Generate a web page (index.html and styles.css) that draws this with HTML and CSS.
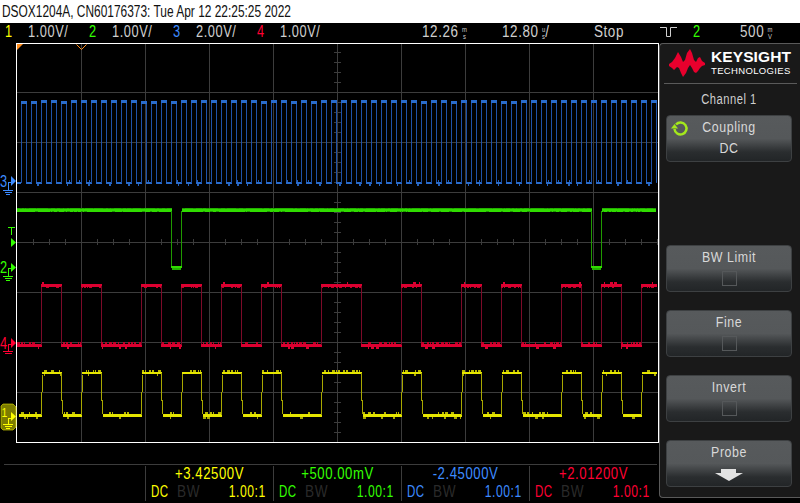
FILE: index.html
```html
<!DOCTYPE html>
<html lang="en">
<head>
<meta charset="utf-8">
<title>DSOX1204A</title>
<link rel="stylesheet" href="styles.css">
</head>
<body>
<header class="title"><span class="title-text">DSOX1204A, CN60176373: Tue Apr 12 22:25:25 2022</span></header>
<div class="status">
  <span class="ch c1 yellow">1</span><span class="scale">1.00V/</span>
  <span class="ch green">2</span><span class="scale">1.00V/</span>
  <span class="ch blue">3</span><span class="scale">2.00V/</span>
  <span class="ch red">4</span><span class="scale">1.00V/</span>
  <span class="val v-delay">12.26<span class="unit"><i>m</i><i>s</i></span></span>
  <span class="val v-time">12.80<span class="unit"><i>u</i><i>s</i></span>/</span>
  <span class="val v-stop">Stop</span>
  <svg class="trig" width="17" height="11" viewBox="0 0 17 11"><path d="M0 .5H6.5V9.5H10.5V.5H17"/></svg>
  <span class="ch v-src green">2</span>
  <span class="val v-level">500<span class="unit"><i>m</i><i>V</i></span></span>
</div>
<div class="main">
  <div class="scope">
    <svg id="plot" class="plot" width="659" height="400" viewBox="0 43 659 400">
      <g id="grid"></g>
      <g id="traces"></g>
      <rect class="frame" x="16.5" y="43.5" width="642" height="399"/>
      <path class="orange" d="M17 44h6l-6 6z"/>
      <path class="orange-line" d="M76.5 44.5L81.5 49.5L86.5 44.5"/>
      <g class="m-blue">
        <text class="mk" x="0" y="187">3</text>
        <path class="arrow" d="M11 176l5 5-5 5z"/>
        <path class="gnd" d="M12 182H8V190M3 190H13M4.500 192.500H11.500M6 194.500H10"/>
      </g>
      <g class="m-green">
        <path class="gnd" d="M8 227.500H15M11.500 228V235"/>
        <path class="arrow" d="M11 238l5 4.500-5 4.500z"/>
        <text class="mk" x="0" y="273">2</text>
        <path class="arrow" d="M11 263l5 4.500-5 4.500z"/>
        <path class="gnd" d="M12 268H8V276M3 276H13M4.500 278.500H11.500M6 280.500H10"/>
      </g>
      <g class="m-red">
        <text class="mk" x="0" y="349">4</text>
        <path class="arrow" d="M11 338l5 5-5 5z"/>
        <path class="gnd" d="M12 344H8V351.500M3 351.500H13M4.500 353.500H11.500"/>
      </g>
      <g class="m-yellow">
        <path class="tab" d="M3 404H13L16 407V427L13 430H3L1 428V406z"/>
        <text class="mk" x="1.500" y="417">1</text>
        <path class="arrow-w" d="M11 412l5 4.500-5 4.500z"/>
        <path class="gnd-w" d="M12 418H8V424M3 424H13M4.500 426H11.500M6 428H10"/>
      </g>
    </svg>
    <div class="readout">
      <div class="cell yellow">
        <div class="offset">+3.42500V</div>
        <div class="probe"><span class="dc">DC</span><span class="bw">BW</span><span class="ratio">1.00:1</span></div>
      </div>
      <div class="cell green">
        <div class="offset">+500.00mV</div>
        <div class="probe"><span class="dc">DC</span><span class="bw">BW</span><span class="ratio">1.00:1</span></div>
      </div>
      <div class="cell blue">
        <div class="offset">-2.45000V</div>
        <div class="probe"><span class="dc">DC</span><span class="bw">BW</span><span class="ratio">1.00:1</span></div>
      </div>
      <div class="cell red">
        <div class="offset">+2.01200V</div>
        <div class="probe"><span class="dc">DC</span><span class="bw">BW</span><span class="ratio">1.00:1</span></div>
      </div>
    </div>
  </div>
  <aside class="panel">
    <div class="logo">
      <svg width="37" height="29" viewBox="668 49 37 29"><path class="wave" d="M668 64L671 62L674 58L677 52L680 57L682 62L684 60L686 53L689 49L691 53L693 60L695 62L697 58L699 57L701 61L704 63V65L701 66L699 68L697 71L695 73L693 72L691 68L689 65L687 68L685 73L682 77L680 73L678 68L676 67L673 70L671 68L668 66z"/></svg>
      <div class="brand"><div class="k">KEYSIGHT</div><div class="t">TECHNOLOGIES</div></div>
    </div>
    <div class="menu-title">Channel 1</div>
    <div class="btn btn-cycle">
      <svg class="cycle" width="18" height="16" viewBox="0 0 18 16"><path class="cy" d="M5 3.500A6 6 0 1 1 3.500 8"/><path class="cy-h" d="M0 7.500H7L3.500 3z"/></svg>
      <div class="lbl">Coupling</div>
      <div class="lbl">DC</div>
    </div>
    <div class="btn btn-gap"><div class="lbl">BW Limit</div><div class="box"></div></div>
    <div class="btn"><div class="lbl">Fine</div><div class="box"></div></div>
    <div class="btn"><div class="lbl">Invert</div><div class="box"></div></div>
    <div class="btn"><div class="lbl">Probe</div>
      <svg class="down" width="30" height="12" viewBox="0 0 30 12"><path d="M7 0H22V4H29L15 12L1 4H7z"/></svg>
    </div>
  </aside>
</div>
<script src="plot.js"></script>
</body>
</html>
```
FILE: styles.css
```css
* { box-sizing: border-box; }
html, body { margin: 0; padding: 0; }
body {
  width: 800px; height: 503px; overflow: hidden; background: #000;
  font-family: "Liberation Sans", sans-serif;
  color: #cfcfcf;
}
.yellow { color: #ffff00; }
.green { color: #33ff00; }
.blue { color: #3d8bff; }
.red { color: #ff0033; }

.title {
  height: 23px; background: #fff; color: #111; font-size: 16px;
  line-height: 24px; padding-left: 2px; white-space: nowrap;
}
.title-text { display: inline-block; transform: scaleX(.745); transform-origin: left center; }
.status {
  height: 20px; padding-bottom: 2px; display: flex; align-items: center; font-size: 16px;
  letter-spacing: .7px; white-space: nowrap;
}
.ch, .scale, .val { display: block; transform: scaleX(.8); transform-origin: left center; }
.val { transform: scaleX(.84); }
.ch { width: 23px; }
.c1 { margin-left: 5px; }
.scale { width: 61px; }
.unit {
  display: inline-flex; flex-direction: column; height: 10px; margin-left: 4px;
  font-size: 7px; line-height: 7px; vertical-align: 5px; letter-spacing: 0; text-align: center;
}
.unit i { font-style: normal; display: block; flex: none; }
.v-delay { margin-left: 81px; width: 80px; }
.v-time { width: 92px; }
.v-stop { width: 66px; }
.trig { fill: none; stroke: #cfcfcf; stroke-width: 1; width: 17px; flex: none; }
.v-src { margin-left: 16px; width: 47px; }

.main { display: flex; height: 460px; }
.scope { width: 659px; flex: none; }
.plot { display: block; }
.frame { fill: none; stroke: #fff; stroke-width: 1; shape-rendering: crispEdges; }
.gl { fill: #3c3c3c; }
.orange { fill: #ff8c1a; }
.orange-line { fill: none; stroke: #ff8c1a; stroke-width: 1; }
.mk { font-size: 16px; transform-box: fill-box; transform-origin: left center; transform: scaleX(.8); }
.gnd { fill: none; stroke-width: 1; shape-rendering: crispEdges; }
.m-blue .mk, .m-blue .arrow { fill: #3d8bff; } .m-blue .gnd { stroke: #3d8bff; }
.m-green .mk, .m-green .arrow { fill: #33ff00; } .m-green .gnd { stroke: #33ff00; }
.m-red .mk, .m-red .arrow { fill: #ff0033; } .m-red .gnd { stroke: #ff0033; }
.m-yellow .tab { fill: #7c7c00; stroke: #e6e600; stroke-width: .6; }
.m-yellow .mk { fill: #ffff00; font-size: 13px; }
.arrow-w { fill: #ffff00; }
.gnd-w { fill: none; stroke: #ffff00; stroke-width: 1; shape-rendering: crispEdges; }
.t-y { fill: #e6e600; } .t-y-d { fill: #a8a800; } .t-y-m { fill: #b8b800; }
.t-r { fill: #dc0030; } .t-r-d { fill: #7c0a28; } .t-r-m { fill: #c00028; }
.t-g { fill: #30dc00; } .t-g-d { fill: #1f9a00; } .t-g-m { fill: #22b000; }
.t-b { fill: #2a6ccc; } .t-b-d { fill: #1f52a8; } .t-b-m { fill: #2560b8; }

.readout {
  margin: 21px 2px 0 4px; border-top: 1px solid #3c3c3c; padding-left: 141px;
  display: grid; grid-template-columns: repeat(4, 128px); font-size: 16px; letter-spacing: .7px;
}
.cell { border-left: 1px solid #3c3c3c; height: 35px; margin-top: 1px; }
.offset { text-align: center; line-height: 16px; height: 17px; transform: scaleX(.82); }
.probe { display: flex; line-height: 17px; padding: 0 7px 0 5px; }
.dc, .bw { display: block; transform: scaleX(.72); transform-origin: left center; }
.bw { color: #2a2a2a; margin-left: 1px; transform: scaleX(.85); }
.ratio { display: block; margin-left: auto; transform: scaleX(.76); transform-origin: right center; }

.panel {
  width: 141px; height: 455px; flex: none; background: #191919;
  border: 1px solid #5a5a5a; border-right: 0; border-radius: 4px 0 0 4px;
  padding: 0 0 0 6px; display: flex; flex-direction: column; align-items: flex-start;
}
.logo {
  display: flex; align-items: flex-start; width: 133px; height: 40px; flex: none; margin-left: -2px;
  padding: 5px 0 0 5px; border-bottom: 1px solid #5a5a5a;
}
.wave { fill: #e8002d; }
.brand { margin-left: 5px; color: #fff; }
.k { font-weight: 700; font-size: 15.500px; line-height: 16px; letter-spacing: .1px; }
.t { font-size: 9.500px; line-height: 11px; letter-spacing: .35px; }
.menu-title {
  width: 126px; flex: none; text-align: center; font-size: 15.500px; letter-spacing: .7px;
  line-height: 29px; height: 31px; transform: scaleX(.72);
}
.btn {
  width: 126px; height: 47px; flex: none; margin-bottom: 18px; position: relative;
  border: 1px solid #3d4042; border-radius: 4px;
  background: linear-gradient(#575a5c 0, #55585a 50%, #2a2d2f 80%, #222527 100%);
  text-align: center; font-size: 15.500px; letter-spacing: .7px; color: #d8d8d8;
}
.btn:last-child { margin-bottom: 0; }
.btn-gap { margin-top: 65px; }
.lbl { line-height: 20px; height: 20px; margin-top: 1px; transform: scaleX(.8); }
.box { width: 15px; height: 15px; margin: 4px auto 0; border: 1px solid #55585a; }
.cycle { position: absolute; left: 4px; top: 5px; }
.cy { fill: none; stroke: #a4e81c; stroke-width: 2.500; }
.cy-h { fill: #a4e81c; }
.down { display: block; margin: 7px auto 0; fill: #e2e2e2; }
```
FILE: plot.js
```js
(function () {
  var NS = 'http://www.w3.org/2000/svg';
  var grid = document.getElementById('grid');
  var tr = document.getElementById('traces');
  var seed = 12345;
  function rnd() { seed = (seed * 16807) % 2147483647; return seed / 2147483647; }
  function rect(parent, cls, x, y, w, h) {
    var r = document.createElementNS(NS, 'rect');
    r.setAttribute('class', cls);
    r.setAttribute('x', x); r.setAttribute('y', y);
    r.setAttribute('width', w); r.setAttribute('height', h);
    r.setAttribute('shape-rendering', 'crispEdges');
    parent.appendChild(r);
  }
  var x, y;
  for (x = 81; x <= 593; x += 64) rect(grid, 'gl', x, 44, 1, 398);
  for (y = 92; y <= 392; y += 50) rect(grid, 'gl', 17, y, 641, 1);
  for (y = 52; y < 442; y += 10) rect(grid, 'gl', 334, y, 7, 1);
  for (x = 33; x < 658; x += 16) rect(grid, 'gl', x, 239, 1, 6);

  function noise(xa, xb, cls, yTop, h, chance) {
    for (var px = xa; px < xb; px++) {
      if (rnd() < chance) {
        var w = 1 + Math.floor(rnd() * 3);
        rect(tr, cls, px, yTop, Math.min(w, xb - px), h);
        px += w;
      }
    }
  }

  var edges = [41,61,81,101,141,161,181,201,221,241,261,281,321,361,401,421,461,481,501,521,561,581,601,621,641];

  // blue
  var bx;
  for (bx = 21; bx < 656; bx += 10) {
    rect(tr, 't-b-d', bx, 103, 1, 80);
    rect(tr, 't-b-d', bx + 5, 103, 1, 80);
    rect(tr, 't-b', bx, 100 + (rnd() < .2 ? 1 : 0), 6, 3);
    rect(tr, 't-b', bx + 5, 182, Math.min(6, 656 - bx - 5), 2);
    if (rnd() < .5) rect(tr, 't-b-m', bx + 6 + Math.floor(rnd() * 3), 184, 1 + Math.floor(rnd() * 2), 2);
    if (rnd() < .4) rect(tr, 't-b-m', bx + 5 + Math.floor(rnd() * 4), 180, 1, 2);
  }
  rect(tr, 't-b', 17, 182, 4, 2);

  // green
  function greenRun(a, b) {
    rect(tr, 't-g', a, 209, b - a, 3);
    rect(tr, 't-g-m', a, 208, b - a, 1);
    noise(a, b, 't-g-d', 208, 1, .18);
    noise(a, b, 't-g-d', 211, 1, .12);
  }
  greenRun(17, 172); greenRun(182, 592); greenRun(602, 656);
  [[171, 181], [591, 601]].forEach(function (p) {
    rect(tr, 't-g-d', p[0], 211, 1, 56);
    rect(tr, 't-g-d', p[1], 211, 1, 56);
    rect(tr, 't-g', p[0], 266, 11, 2);
    rect(tr, 't-g-m', p[0] + 1, 268, 9, 2);
  });

  // red & yellow
  var prev = 17;
  edges.concat([656]).forEach(function (e, idx) {
    var high = idx % 2 === 1; // the run before an odd edge is high
    var a = prev, b = e;
    if (high) {
      rect(tr, 't-r', a, 284, b - a + 1, 3);
      noise(a, b, 't-r-m', 287, 1, .4);
      noise(a, b, 't-r', 282, 2, .04);
      rect(tr, 't-y', a + 1, 372, b - a, 2);
      noise(a + 1, b, 't-y-m', 370, 2, .4);
      noise(a + 1, b, 't-y-d', 374, 2, .04);
    } else {
      rect(tr, 't-r', a, 344, b - a + 1, 3);
      noise(a, b, 't-r-m', 342, 2, .45);
      noise(a, b, 't-r', 347, 2, .06);
      rect(tr, 't-y', a + 2, 414, b - a - 1, 3);
      noise(a + 2, b, 't-y-m', 412, 2, .2);
      noise(a + 2, b, 't-y-d', 417, 2, .08);
    }
    if (e < 656) {
      rect(tr, 't-r-d', e, 286, 1, 59);
      if (high) {
        rect(tr, 't-y-d', e, 373, 1, 28);
        rect(tr, 't-y-d', e + 1, 400, 1, 14);
      } else {
        rect(tr, 't-y-d', e, 392, 1, 23);
        rect(tr, 't-y-d', e + 1, 375, 1, 17);
      }
    }
    prev = e;
  });
})();
```
